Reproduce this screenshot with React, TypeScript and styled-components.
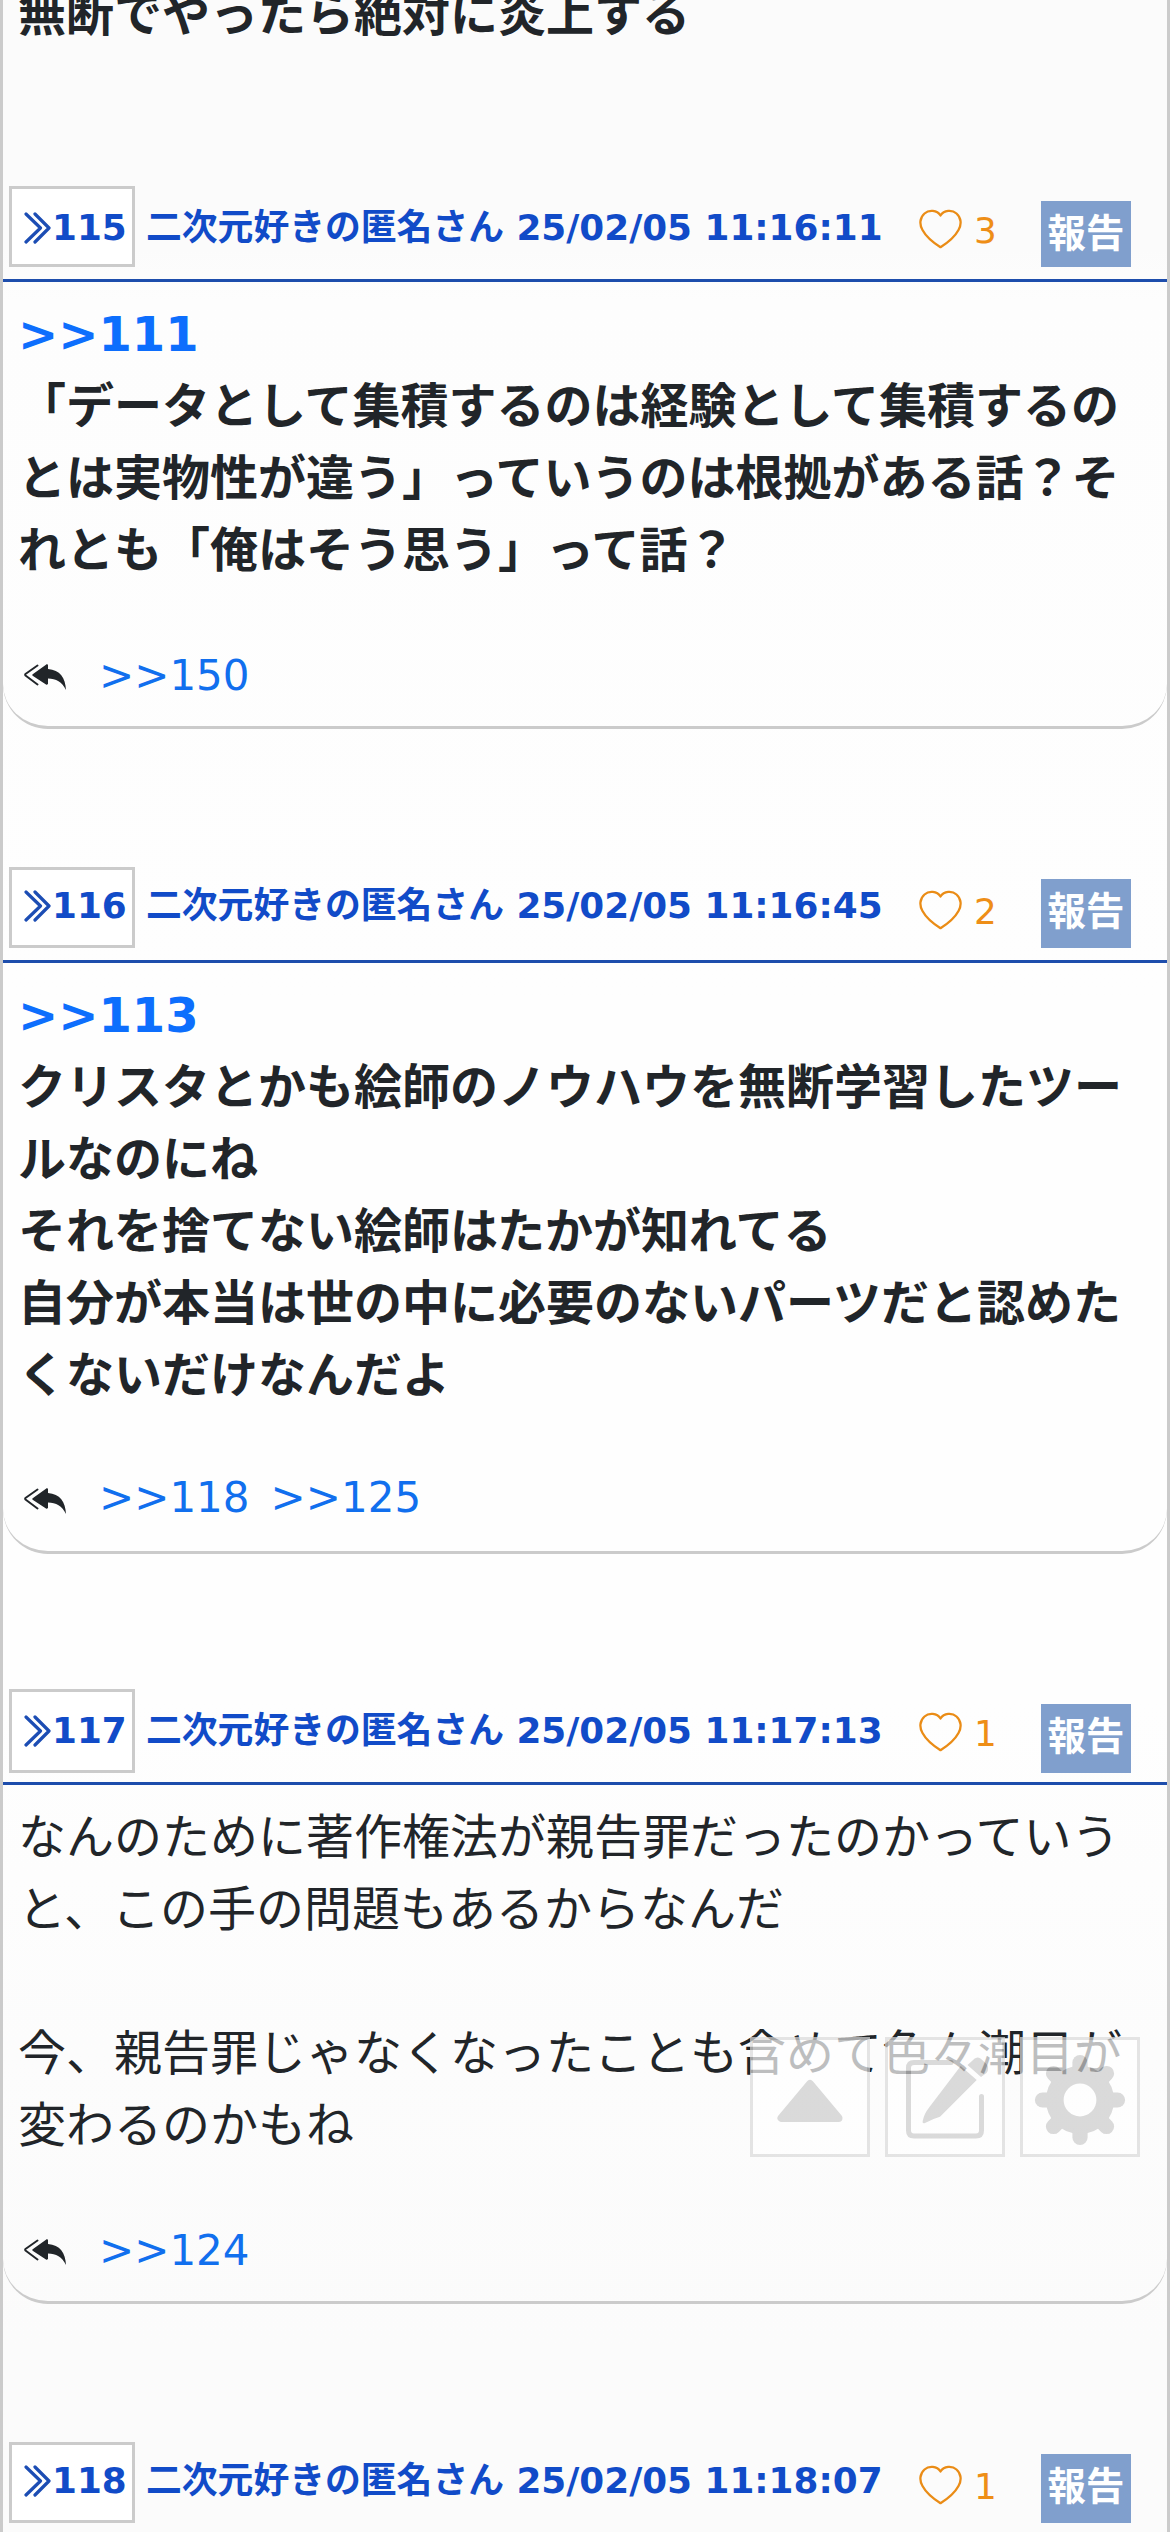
import React from "react";
import styled, { createGlobalStyle } from "styled-components";

const GlobalStyle = createGlobalStyle`
  * { box-sizing: border-box; }
  body {
    margin: 0;
    overflow: hidden;
    background: #fdfdfd;
    color: #212529;
    font-family: "DejaVu Sans", "Noto Sans CJK JP", sans-serif;
  }
`;

const Page = styled.main`
  position: relative;
  width: 1170px;
  height: 2532px;
  overflow: hidden;
  display: flex;
  flex-direction: column;
  border: solid #cbcbcb;
  border-width: 0 3px;
  background: linear-gradient(#fbfbfb 0, #fbfbfb 250px, #fdfdfd 300px, #fefefe 1000px, #fefefe 1700px, #fcfcfc 2050px, #fbfbfb 2350px);
`;

const Previous = styled.p`
  flex: none;
  margin: 0;
  height: 186px;
  padding-left: 15px;
  font-size: 48px;
  font-weight: 700;
  line-height: 72px;
  & > span {
    display: block;
    margin-top: -22px;
  }
`;

const Post = styled.article<{ $gap: number }>`
  flex: none;
  margin-bottom: ${(p) => p.$gap}px;
`;

const Header = styled.header`
  height: 96px;
  display: flex;
  align-items: flex-start;
  padding-left: 6px;
  border-bottom: 3px solid #1d4dac;
  color: #114bc8;
  font-size: 35.8px;
  font-weight: 700;
  line-height: 54px;
  white-space: nowrap;
`;

const NumberBox = styled.a<{ $height: number; $shift: number }>`
  width: 126px;
  height: ${(p) => p.$height}px;
  flex: none;
  display: flex;
  padding: ${(p) => 9 + p.$shift}px 0 0 12px;
  border: 3px solid #cbcbcb;
  background: #fff;
  & > svg { margin: 11px 1px 0 0; flex: none; }
`;

const Author = styled.span<{ $shift: number }>`
  width: 773px;
  margin-top: ${(p) => 12 + p.$shift}px;
  padding-left: 11px;
`;

const Likes = styled.span`
  width: 133px;
  display: flex;
  margin-top: 18px;
  padding-left: 11px;
  color: #ee8e17;
  font-weight: 400;
  & > svg { margin: 5px 12px 0 0; flex: none; }
`;

const Report = styled.button<{ $height: number; $top: number }>`
  width: 90px;
  height: ${(p) => p.$height}px;
  margin: ${(p) => p.$top}px 0 0;
  padding: 0;
  display: flex;
  justify-content: center;
  border: 0;
  background: #809fcd;
  color: #fff;
  font: inherit;
  font-size: 38.4px;
  line-height: 65px;
`;

const Card = styled.div<{ $height: number; $bottom: number }>`
  height: ${(p) => p.$height}px;
  display: flex;
  flex-direction: column;
  justify-content: space-between;
  padding: 16px 15px ${(p) => p.$bottom}px;
  border-bottom: 3px solid #cbcbcb;
  border-radius: 0 0 45px 45px;
`;

const Body = styled.div<{ $bold: boolean }>`
  font-size: 48px;
  line-height: 72px;
  font-weight: ${(p) => (p.$bold ? 700 : 400)};
  white-space: pre;
`;

const Anchor = styled.a`
  display: block;
  color: #0d6efd;
`;

const Replies = styled.footer<{ $iconTop: number }>`
  display: flex;
  height: 63px;
  gap: 21px;
  color: #116fee;
  font-size: 42px;
  line-height: 63px;
  & > svg { margin: ${(p) => p.$iconTop}px 11px 0 6px; flex: none; }
`;

const Tools = styled.nav`
  position: absolute;
  left: 747px;
  top: 2037px;
  display: flex;
  gap: 15px;
  opacity: 0.7;
`;

const Tool = styled.button`
  width: 120px;
  height: 120px;
  padding: 0;
  border: 3px solid #dadada;
  background: #fff;
  & > svg { display: block; }
`;

const ChevronsIcon = () => (
  <svg width="27" height="32" viewBox="0 0 27 32" fill="none" stroke="#1c4db4" strokeWidth="3.2" strokeLinecap="round" strokeLinejoin="round">
    <path d="M2 2L16.5 16L2 30M11 2L25 16L11 30" />
  </svg>
);

const HeartIcon = () => (
  <svg width="43" height="40" viewBox="0 0 43 40" fill="none" stroke="#ea8c16" strokeWidth="2.3" strokeLinejoin="round">
    <path d="M21.5 6.5C25 1 33 .5 37.5 4.500C42 8.500 43 15 39.500 21C36 27.500 29 33.500 21.500 38.200C14 33.500 7 27.500 3.500 21C0 15 1 8.500 5.500 4.500C10 .5 18 1 21.500 6.500Z" />
  </svg>
);

const ReplyAllIcon = () => (
  <svg width="43" height="27" viewBox="0 0 43 27" fill="#212529">
    <path d="M9 10C8 10.800 8 11.300 9 12L22 20.500C23 21 24 20.500 24 19.500V14.500C32 14.500 38 18 42 26C41.500 14 36 5.800 24 5V1.500C24 .5 23 0 22 .7Z" />
    <path d="M13.500 1.500L1.500 10Q.8 10.800 1.500 11.500L13.500 20.500" fill="none" stroke="#212529" strokeWidth="1.900" strokeLinecap="round" />
  </svg>
);

const UpIcon = () => (
  <svg width="114" height="114" viewBox="0 0 114 114" fill="#ccc" stroke="#ccc" strokeWidth="8" strokeLinejoin="round">
    <path d="M57 44L28.500 78H85.500Z" />
  </svg>
);

const EditIcon = () => (
  <svg width="114" height="114" viewBox="0 0 114 114" fill="#ccc">
    <path d="M63 22.500H26Q20.500 22.500 20.500 28V90.500Q20.500 96 26 96H88Q93.500 96 93.500 90.500V56.500" fill="none" stroke="#ccc" strokeWidth="5" strokeLinecap="round" />
    <path d="M72.700 26L88.700 40L52 76.700Q44 79 37 83Q34 84 34.700 81Q36 74 41.300 67.300Z" />
    <path d="M84 21Q88 15.500 92.500 18.500L98 23.500Q102 28 98.500 33L93 37L79.500 25Z" />
  </svg>
);

const GearIcon = () => {
  const teeth = Array.from({ length: 8 }, (_, i) => i * 45);
  return (
    <svg width="114" height="114" viewBox="0 0 114 114" fill="none" stroke="#ccc">
      <circle cx="57" cy="60" r="25.200" strokeWidth="17.600" />
      <g strokeWidth="15.200" strokeLinecap="round">
        {teeth.map((a) => (
          <path key={a} d="M57 28V22.500" transform={`rotate(${a} 57 60)`} />
        ))}
      </g>
    </svg>
  );
};

interface PostData {
  id: number;
  time: string;
  likes: number;
  bold: boolean;
  anchor?: string;
  lines: string[];
  replies: string[];
  cardHeight: number;
  cardBottom: number;
  iconTop: number;
  gap: number;
  boxHeight: number;
  shift: number;
  reportTop: number;
  reportHeight: number;
}

const posts: PostData[] = [
  {
    id: 115, time: "25/02/05 11:16:11", likes: 3, bold: true, anchor: ">>111",
    lines: ["「データとして集積するのは経験として集積するの", "とは実物性が違う」っていうのは根拠がある話？そ", "れとも「俺はそう思う」って話？"],
    replies: [">>150"],
    cardHeight: 447, cardBottom: 19, iconTop: 20, gap: 138, boxHeight: 81, shift: 3, reportTop: 15, reportHeight: 66,
  },
  {
    id: 116, time: "25/02/05 11:16:45", likes: 2, bold: true, anchor: ">>113",
    lines: ["クリスタとかも絵師のノウハウを無断学習したツー", "ルなのにね", "それを捨てない絵師はたかが知れてる", "自分が本当は世の中に必要のないパーツだと認めた", "くないだけなんだよ"],
    replies: [">>118", ">>125"],
    cardHeight: 591, cardBottom: 22, iconTop: 22, gap: 135, boxHeight: 81, shift: 0, reportTop: 12, reportHeight: 69,
  },
  {
    id: 117, time: "25/02/05 11:17:13", likes: 1, bold: false,
    lines: ["なんのために著作権法が親告罪だったのかっていう", "と、この手の問題もあるからなんだ", " ", "今、親告罪じゃなくなったことも含めて色々潮目が", "変わるのかもね"],
    replies: [">>124"],
    cardHeight: 519, cardBottom: 19, iconTop: 20, gap: 138, boxHeight: 84, shift: 3, reportTop: 15, reportHeight: 69,
  },
  {
    id: 118, time: "25/02/05 11:18:07", likes: 1, bold: false, lines: [], replies: [],
    cardHeight: 0, cardBottom: 0, iconTop: 0, gap: 0, boxHeight: 81, shift: 0, reportTop: 12, reportHeight: 69,
  },
];

export default function App() {
  return (
    <>
      <GlobalStyle />
      <Page>
        <Previous><span>無断でやったら絶対に炎上する</span></Previous>
        {posts.map((post) => (
          <Post key={post.id} $gap={post.gap}>
            <Header>
              <NumberBox $height={post.boxHeight} $shift={post.shift}>
                <ChevronsIcon />
                {post.id}
              </NumberBox>
              <Author $shift={post.shift}>二次元好きの匿名さん {post.time}</Author>
              <Likes>
                <HeartIcon />
                {post.likes}
              </Likes>
              <Report $top={post.reportTop} $height={post.reportHeight}>報告</Report>
            </Header>
            {post.lines.length > 0 && (
              <Card $height={post.cardHeight} $bottom={post.cardBottom}>
                <Body $bold={post.bold}>
                  {post.anchor && <Anchor>{post.anchor}</Anchor>}
                  {post.lines.join("\n")}
                </Body>
                <Replies $iconTop={post.iconTop}>
                  <ReplyAllIcon />
                  {post.replies.map((r) => (
                    <span key={r}>{r}</span>
                  ))}
                </Replies>
              </Card>
            )}
          </Post>
        ))}
        <Tools>
          <Tool><UpIcon /></Tool>
          <Tool><EditIcon /></Tool>
          <Tool><GearIcon /></Tool>
        </Tools>
      </Page>
    </>
  );
}
